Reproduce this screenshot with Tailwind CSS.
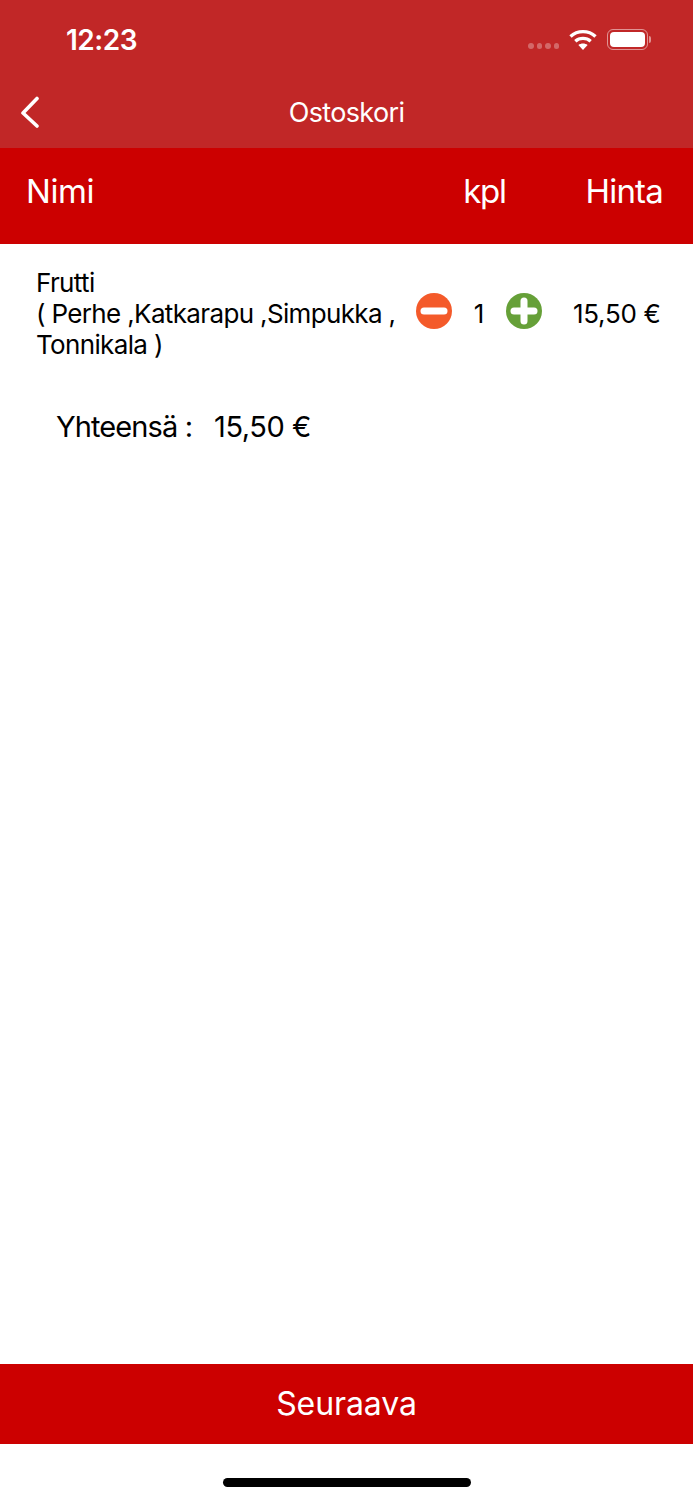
<!DOCTYPE html>
<html lang="fi">
<head>
  <meta charset="UTF-8">
  <title>Ostoskori</title>
  <script src="https://cdn.jsdelivr.net/npm/@tailwindcss/browser@4"></script>
</head>
<body class="bg-white text-black font-['Inter',sans-serif]">
  <div class="w-[693px] h-[1500px] flex flex-col overflow-hidden">

    <!-- status bar + nav -->
    <header class="h-[148px] shrink-0 bg-[#c12727] text-white flex flex-col">
      <div class="h-[80px] flex items-center pl-[66px] pr-[42px]">
        <span class="text-[28px] font-semibold tracking-[-0.5px] leading-none">12:23</span>
        <div class="ml-auto flex items-center">
          <div class="flex gap-[3px] mt-[12px] mr-[10px]">
            <i class="w-[5.5px] h-[5.5px] rounded-full bg-white/30"></i>
            <i class="w-[5.5px] h-[5.5px] rounded-full bg-white/30"></i>
            <i class="w-[5.5px] h-[5.5px] rounded-full bg-white/30"></i>
            <i class="w-[5.5px] h-[5.5px] rounded-full bg-white/30"></i>
          </div>
          <svg class="w-[28px] h-[21px] mr-[10px] -mt-[2px]" viewBox="0 0 28 21" fill="none" stroke="white" stroke-width="3.4">
            <path d="M1.5 7.5C8.5 1 19.5 1 26.5 7.5"/>
            <path d="M6.3 12.2C10.7 8.4 17.3 8.4 21.7 12.2"/>
            <path d="M14 21l-4.6-5c2.6-2 6.6-2 9.2 0z" fill="white" stroke="none"/>
          </svg>
          <div class="w-[41px] h-[21px] rounded-[6px] border border-white/50 p-[2px] -mt-[2px]">
            <div class="w-full h-full rounded-[4px] bg-white"></div>
          </div>
          <div class="w-[2px] h-[7px] rounded-r-full bg-white/50 ml-[1px] -mt-[2px]"></div>
        </div>
      </div>
      <div class="relative flex-1 flex items-center justify-center">
        <svg class="absolute left-[20px] top-[16px] w-[20px] h-[32px]" viewBox="0 0 20 32" fill="none" stroke="white" stroke-width="3.6" stroke-linecap="round" stroke-linejoin="round">
          <path d="M17 2.5L3 17l14 13"/>
        </svg>
        <h1 class="text-[27px] tracking-[-0.65px] -mt-[2px]">Ostoskori</h1>
      </div>
    </header>

    <!-- table head -->
    <div class="h-[96px] shrink-0 bg-[#cc0000] text-white text-[33px] tracking-[-0.4px] flex items-center pl-[26px] pr-[30px] pb-[8px]">
      <span class="flex-1">Nimi</span>
      <span class="mr-[80px] tracking-[-1.4px]">kpl</span>
      <span class="tracking-[-0.8px]">Hinta</span>
    </div>

    <main class="flex-1">
      <div class="flex items-center pl-[36px] pt-[23px] text-[26px] leading-[31px]">
        <p class="w-[371px] shrink-0 tracking-[-0.65px]">Frutti<br>( Perhe ,Katkarapu ,Simpukka , Tonnikala )</p>
        <svg class="w-[36px] h-[36px] ml-[9px] -mt-[6px] shrink-0" viewBox="0 0 36 36">
          <circle cx="18" cy="18" r="18" fill="#f45a2a"/>
          <rect x="4.5" y="14.5" width="27" height="7" rx="3.5" fill="white"/>
        </svg>
        <span class="w-[54px] text-center shrink-0">1</span>
        <svg class="w-[36px] h-[36px] -mt-[6px] shrink-0" viewBox="0 0 36 36">
          <circle cx="18" cy="18" r="18" fill="#66a038"/>
          <rect x="4.5" y="14.5" width="27" height="7" rx="3.5" fill="white"/>
          <rect x="14.5" y="4.5" width="7" height="27" rx="3.5" fill="white"/>
        </svg>
        <span class="ml-[31px] whitespace-nowrap tracking-[-0.3px]">15,50 €</span>
      </div>
      <div class="pl-[56px] mt-[49px] text-[29px] leading-[36px] flex">
        <span class="tracking-[-0.9px]">Yhteensä :</span>
        <span class="ml-[22px] tracking-[-0.45px]">15,50 €</span>
      </div>
    </main>

    <button class="h-[80px] shrink-0 bg-[#cc0000] text-white text-[32px] tracking-[-0.1px]">Seuraava</button>

    <div class="h-[56px] shrink-0 flex justify-center pt-[34px]">
      <div class="w-[248px] h-[9px] rounded-full bg-black"></div>
    </div>
  </div>
</body>
</html>
